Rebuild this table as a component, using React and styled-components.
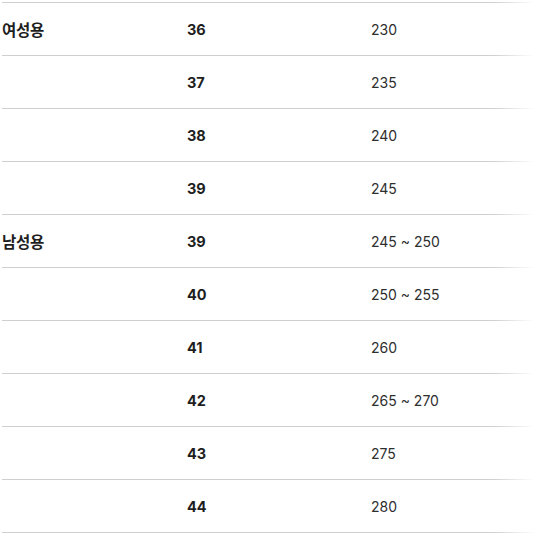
import React from 'react';
import styled, { createGlobalStyle } from 'styled-components';

const GlobalStyle = createGlobalStyle`
  html, body {
    margin: 0;
    padding: 0;
    background: #ffffff;
  }
  body {
    font-family: Inter, "Noto Sans CJK KR", sans-serif;
  }
`;

const sizes = [
  { group: '여성용', eu: '36', mm: '230' },
  { group: '', eu: '37', mm: '235' },
  { group: '', eu: '38', mm: '240' },
  { group: '', eu: '39', mm: '245' },
  { group: '남성용', eu: '39', mm: '245 ~ 250' },
  { group: '', eu: '40', mm: '250 ~ 255' },
  { group: '', eu: '41', mm: '260' },
  { group: '', eu: '42', mm: '265 ~ 270' },
  { group: '', eu: '43', mm: '275' },
  { group: '', eu: '44', mm: '280' },
];

const Wrapper = styled.div`
  position: relative;
  width: 533px;
  height: 533px;
  padding-top: 2px;
  padding-left: 2px;
  box-sizing: border-box;
  overflow: hidden;
`;

const Table = styled.div`
  display: flex;
  flex-direction: column;
  border-top: 1px solid #cfcfcf;
  width: 560px;
`;

const Row = styled.div`
  display: grid;
  grid-template-columns: 185px 184px 1fr;
  align-items: center;
  height: 52px;
  border-bottom: 1px solid #cfcfcf;
`;

const Cell = styled.div`
  font-size: ${(p) => (p.$kr ? '15.5px' : p.$bold ? '14.5px' : '14px')};
  color: ${(p) => (p.$bold ? '#1e1e1e' : '#2e2e2e')};
  font-weight: ${(p) => (p.$bold ? 700 : 400)};
  font-family: ${(p) =>
    p.$kr
      ? '"Noto Sans CJK KR", sans-serif'
      : 'Inter, "Noto Sans CJK KR", sans-serif'};
  letter-spacing: ${(p) => (p.$kr ? '-0.3px' : '0')};
  white-space: nowrap;
`;

const Fade = styled.div`
  position: absolute;
  top: 0;
  right: 0;
  width: 40px;
  height: 100%;
  background: linear-gradient(to right, rgba(255, 255, 255, 0), rgba(255, 255, 255, 0.95));
  pointer-events: none;
`;

const App = () => {
  return (
    <>
      <GlobalStyle />
      <Wrapper>
        <Table>
          {sizes.map((s, i) => (
            <Row key={i}>
              <Cell $bold $kr>{s.group}</Cell>
              <Cell $bold>{s.eu}</Cell>
              <Cell>{s.mm}</Cell>
            </Row>
          ))}
        </Table>
        <Fade />
      </Wrapper>
    </>
  );
};

export default App;
